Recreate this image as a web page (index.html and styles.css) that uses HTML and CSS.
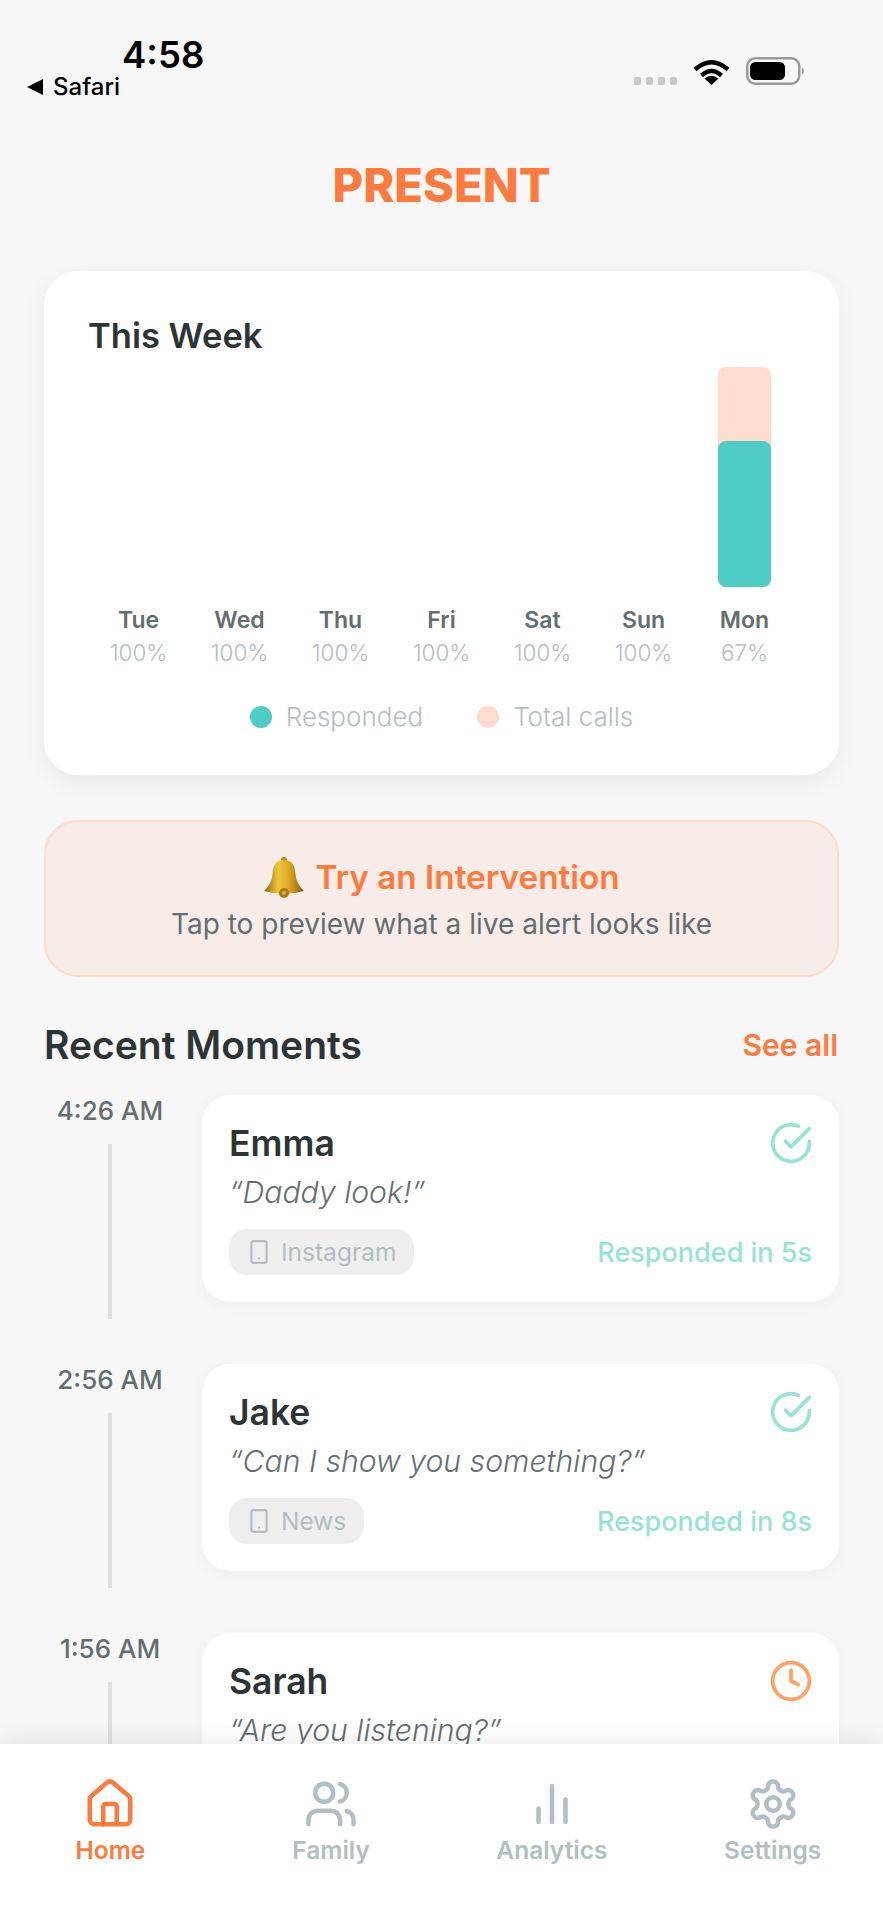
FILE: index.html
```html
<!DOCTYPE html>
<html lang="en">
<head>
  <meta charset="UTF-8">
  <meta name="viewport" content="width=device-width, initial-scale=1.0">
  <title>Present</title>
  <link rel="stylesheet" href="styles.css">
</head>
<body>
  <div class="page">
    <div class="status-bar">
      <div class="status-left">
        <div class="status-time">4:58</div>
        <div class="status-back">
          <svg width="16" height="16" viewBox="0 0 16 16"><polygon points="0,8 16,0 16,16" fill="#000"/></svg>
          <span>Safari</span>
        </div>
      </div>
      <div class="status-right">
        <div class="signal-dots"><i></i><i></i><i></i><i></i></div>
        <svg width="37" height="27" viewBox="0 0 37 27">
          <path d="M2 11.5Q18.500 -3 35 11.500" fill="none" stroke="#000" stroke-width="4.500"/>
          <path d="M8.500 17.500Q18.500 8.500 28.500 17.500" fill="none" stroke="#000" stroke-width="4.500"/>
          <path d="M18.500 27L11.500 20.500Q18.500 15 25.500 20.500Z" fill="#000"/>
        </svg>
        <svg width="59" height="28" viewBox="0 0 59 28">
          <rect x="1.250" y="1.250" width="52" height="25.500" rx="8" fill="none" stroke="#9a9a9a" stroke-width="2.500"/>
          <rect x="4" y="5" width="35" height="18" rx="5.500" fill="#000"/>
          <path d="M56 10.500a4 4 0 0 1 0 7z" fill="#9a9a9a"/>
        </svg>
      </div>
    </div>

    <h1 class="brand">PRESENT</h1>

    <div class="content">
      <section class="week-card">
        <h2 class="week-title">This Week</h2>
        <div class="bars">
          <div class="bar-col"></div>
          <div class="bar-col"></div>
          <div class="bar-col"></div>
          <div class="bar-col"></div>
          <div class="bar-col"></div>
          <div class="bar-col"></div>
          <div class="bar-col">
            <div class="bar-total">
              <div class="bar-responded" style="height: 66.5%"></div>
            </div>
          </div>
        </div>
        <div class="days">
          <div class="day"><span class="day-name">Tue</span><span class="day-pct">100%</span></div>
          <div class="day"><span class="day-name">Wed</span><span class="day-pct">100%</span></div>
          <div class="day"><span class="day-name">Thu</span><span class="day-pct">100%</span></div>
          <div class="day"><span class="day-name">Fri</span><span class="day-pct">100%</span></div>
          <div class="day"><span class="day-name">Sat</span><span class="day-pct">100%</span></div>
          <div class="day"><span class="day-name">Sun</span><span class="day-pct">100%</span></div>
          <div class="day"><span class="day-name">Mon</span><span class="day-pct">67%</span></div>
        </div>
        <div class="legend">
          <div class="legend-item"><span class="dot dot-teal"></span>Responded</div>
          <div class="legend-item"><span class="dot dot-peach"></span>Total calls</div>
        </div>
      </section>

      <section class="intervention">
        <div class="intervention-title">
          <svg class="bell" width="42" height="42" viewBox="0 0 42 42">
            <defs>
              <linearGradient id="bell-gold" x1="0" y1="0" x2="1" y2="0">
                <stop offset="0" stop-color="#8a6410"/>
                <stop offset="0.35" stop-color="#f0c63a"/>
                <stop offset="0.65" stop-color="#d9a521"/>
                <stop offset="1" stop-color="#7d5a0c"/>
              </linearGradient>
            </defs>
            <circle cx="21" cy="4" r="3" fill="#b88a1a"/>
            <path d="M21 4C12 4 10 11 9.500 18C9 25 6 30 1 35Q21 41 41 35C36 30 33 25 32.500 18C32 11 30 4 21 4Z" fill="url(#bell-gold)"/>
            <circle cx="21" cy="37" r="5" fill="#a87a18"/>
            <circle cx="21" cy="37" r="2" fill="#e0b040"/>
          </svg>
          <span>Try an Intervention</span>
        </div>
        <div class="intervention-sub">Tap to preview what a live alert looks like</div>
      </section>

      <div class="section-head">
        <h2>Recent Moments</h2>
        <span class="see-all">See all</span>
      </div>

      <div class="moments">
        <div class="moment">
          <div class="moment-time">
            <span>4:26 AM</span>
            <div class="moment-line"></div>
          </div>
          <div class="moment-card">
            <div class="moment-top">
              <span class="moment-name">Emma</span>
              <svg class="state-icon icon-teal" viewBox="0 0 24 24"><path d="M22 11.080V12a10 10 0 1 1-5.930-9.140"/><polyline points="22 4 12 14.010 9 11.010"/></svg>
            </div>
            <div class="moment-quote">“Daddy look!”</div>
            <div class="moment-foot">
              <span class="app-pill">
                <svg class="phone-icon" viewBox="0 0 24 24"><rect x="5" y="2" width="14" height="20" rx="2"/><line x1="12" y1="18" x2="12.010" y2="18"/></svg>
                Instagram
              </span>
              <span class="responded">Responded in 5s</span>
            </div>
          </div>
        </div>

        <div class="moment">
          <div class="moment-time">
            <span>2:56 AM</span>
            <div class="moment-line"></div>
          </div>
          <div class="moment-card">
            <div class="moment-top">
              <span class="moment-name">Jake</span>
              <svg class="state-icon icon-teal" viewBox="0 0 24 24"><path d="M22 11.080V12a10 10 0 1 1-5.930-9.140"/><polyline points="22 4 12 14.010 9 11.010"/></svg>
            </div>
            <div class="moment-quote">“Can I show you something?”</div>
            <div class="moment-foot">
              <span class="app-pill">
                <svg class="phone-icon" viewBox="0 0 24 24"><rect x="5" y="2" width="14" height="20" rx="2"/><line x1="12" y1="18" x2="12.010" y2="18"/></svg>
                News
              </span>
              <span class="responded">Responded in 8s</span>
            </div>
          </div>
        </div>

        <div class="moment">
          <div class="moment-time">
            <span>1:56 AM</span>
            <div class="moment-line"></div>
          </div>
          <div class="moment-card">
            <div class="moment-top">
              <span class="moment-name">Sarah</span>
              <svg class="state-icon icon-amber" viewBox="0 0 24 24"><circle cx="12" cy="12" r="10"/><polyline points="12 6 12 12 16 14"/></svg>
            </div>
            <div class="moment-quote">“Are you listening?”</div>
          </div>
        </div>
      </div>
    </div>

    <nav class="tab-bar">
      <div class="tab tab-active">
        <svg class="tab-icon" viewBox="0 0 24 24"><path d="M15 21v-8a1 1 0 0 0-1-1h-4a1 1 0 0 0-1 1v8"/><path d="M3 10a2 2 0 0 1 .709-1.528l7-5.999a2 2 0 0 1 2.582 0l7 5.999A2 2 0 0 1 21 10v9a2 2 0 0 1-2 2H5a2 2 0 0 1-2-2z"/></svg>
        <span>Home</span>
      </div>
      <div class="tab">
        <svg class="tab-icon" viewBox="0 0 24 24"><path d="M16 21v-2a4 4 0 0 0-4-4H6a4 4 0 0 0-4 4v2"/><circle cx="9" cy="7" r="4"/><path d="M22 21v-2a4 4 0 0 0-3-3.870"/><path d="M16 3.130a4 4 0 0 1 0 7.750"/></svg>
        <span>Family</span>
      </div>
      <div class="tab">
        <svg class="tab-icon" viewBox="0 0 24 24"><line x1="18" y1="20" x2="18" y2="10"/><line x1="12" y1="20" x2="12" y2="4"/><line x1="6" y1="20" x2="6" y2="14"/></svg>
        <span>Analytics</span>
      </div>
      <div class="tab">
        <svg class="tab-icon" viewBox="0 0 24 24"><path d="M12.220 2h-.44a2 2 0 0 0-2 2v.18a2 2 0 0 1-1 1.730l-.43.25a2 2 0 0 1-2 0l-.15-.08a2 2 0 0 0-2.730.73l-.22.38a2 2 0 0 0 .73 2.730l.15.1a2 2 0 0 1 1 1.720v.51a2 2 0 0 1-1 1.740l-.15.09a2 2 0 0 0-.73 2.730l.22.38a2 2 0 0 0 2.730.73l.15-.08a2 2 0 0 1 2 0l.43.25a2 2 0 0 1 1 1.730V20a2 2 0 0 0 2 2h.44a2 2 0 0 0 2-2v-.18a2 2 0 0 1 1-1.730l.43-.25a2 2 0 0 1 2 0l.15.08a2 2 0 0 0 2.730-.73l.22-.39a2 2 0 0 0-.73-2.730l-.15-.08a2 2 0 0 1-1-1.740v-.5a2 2 0 0 1 1-1.740l.15-.09a2 2 0 0 0 .73-2.730l-.22-.38a2 2 0 0 0-2.730-.73l-.15.08a2 2 0 0 1-2 0l-.43-.25a2 2 0 0 1-1-1.730V4a2 2 0 0 0-2-2z"/><circle cx="12" cy="12" r="3"/></svg>
        <span>Settings</span>
      </div>
    </nav>
  </div>
</body>
</html>
```

FILE: styles.css
```css
body {
  margin: 0;
  padding: 0;
  background-color: #f7f7f7;
  font-family: Inter, "Liberation Sans", sans-serif;
  color: #2d3436;
}
h1, h2 {
  margin: 0;
}
.page {
  position: relative;
  height: 1920px;
  overflow: hidden;
}

/* status bar */
.status-bar {
  display: flex;
  justify-content: space-between;
  align-items: flex-start;
  height: 124px;
  padding: 0 78px 0 27px;
  box-sizing: border-box;
}
.status-time {
  margin: 33px 0 0 95px;
  font-size: 36.5px;
  line-height: 44px;
  font-weight: 600;
  color: #000;
}
.status-back {
  display: flex;
  align-items: center;
  gap: 10px;
  margin-top: -4px;
  font-size: 24px;
  line-height: 28px;
  font-weight: 500;
  color: #000;
}
.status-right {
  display: flex;
  align-items: flex-end;
  gap: 16px;
  margin-top: 57px;
}
.signal-dots {
  display: flex;
  gap: 5px;
  height: 8px;
}
.signal-dots i {
  width: 7px;
  height: 8px;
  border-radius: 2px;
  background-color: #c8c8c8;
}

.brand {
  height: 122px;
  font-size: 47px;
  line-height: 122px;
  font-weight: 800;
  text-align: center;
  color: #ff7a3d;
}

.content {
  padding: 25px 44px 0;
}

/* this week card */
.week-card {
  padding: 44px 44px 42px;
  background-color: white;
  border-radius: 34px;
  box-shadow: 0 8px 24px rgba(0, 0, 0, 0.06);
}
.week-title {
  font-size: 34.5px;
  line-height: 42px;
  font-weight: 600;
}
.bars, .days {
  display: grid;
  grid-template-columns: repeat(7, 1fr);
}
.bars {
  height: 220px;
  margin-top: 10px;
}
.bar-col {
  display: flex;
  justify-content: center;
}
.bar-total {
  display: flex;
  align-items: flex-end;
  width: 53px;
  height: 100%;
  background-color: #ffdccf;
  border-radius: 8px;
}
.bar-responded {
  width: 100%;
  background-color: #4ecdc4;
  border-radius: 8px;
}
.days {
  margin-top: 18px;
}
.day {
  display: flex;
  flex-direction: column;
  align-items: center;
}
.day-name {
  font-size: 23px;
  line-height: 30px;
  font-weight: 600;
  color: #636e72;
}
.day-pct {
  margin-top: 5px;
  font-size: 22.4px;
  line-height: 26px;
  font-weight: 300;
  color: #b2bec3;
}
.legend {
  display: flex;
  justify-content: center;
  gap: 54px;
  margin-top: 35px;
}
.legend-item {
  display: flex;
  align-items: center;
  gap: 14px;
  font-size: 26px;
  line-height: 32px;
  font-weight: 300;
  color: #b2bec3;
}
.dot {
  width: 22px;
  height: 22px;
  border-radius: 50%;
}
.dot-teal {
  background-color: #4ecdc4;
}
.dot-peach {
  background-color: #ffdccf;
}

/* intervention banner */
.intervention {
  display: flex;
  flex-direction: column;
  align-items: center;
  justify-content: center;
  gap: 8px;
  height: 157px;
  box-sizing: border-box;
  margin-top: 45px;
  background-color: #f7ece8;
  border: 2px solid #fddccd;
  border-radius: 34px;
}
.intervention-title {
  display: flex;
  align-items: center;
  gap: 10px;
  font-size: 33.3px;
  line-height: 40px;
  font-weight: 600;
  color: #ff7a3d;
}
.intervention-sub {
  font-size: 28px;
  line-height: 36px;
  color: #636e72;
}

/* recent moments */
.section-head {
  display: flex;
  justify-content: space-between;
  align-items: center;
  margin-top: 45px;
}
.section-head h2 {
  font-size: 39px;
  line-height: 46px;
  font-weight: 600;
}
.see-all {
  margin-right: 1px;
  font-size: 30px;
  font-weight: 600;
  color: #ff7a3d;
}
.moments {
  display: flex;
  flex-direction: column;
  gap: 45px;
  margin-top: 27px;
}
.moment {
  display: flex;
  gap: 26px;
}
.moment-time {
  display: flex;
  flex-direction: column;
  align-items: center;
  flex: 0 0 132px;
  font-size: 26px;
  line-height: 32px;
  font-weight: 500;
  color: #636e72;
}
.moment-line {
  flex: 1;
  width: 4px;
  margin-top: 17px;
  background-color: #e0e0e0;
}
.moment-card {
  flex: 1;
  margin-bottom: 17px;
  padding: 28px 27px 27px 27px;
  background-color: white;
  border-radius: 28px;
  box-shadow: 0 4px 16px rgba(0, 0, 0, 0.04);
}
.moment-top {
  display: flex;
  justify-content: space-between;
  align-items: center;
  height: 40px;
}
.moment-name {
  margin-top: 2px;
  font-size: 35.5px;
  line-height: 40px;
  font-weight: 600;
}
.state-icon {
  width: 44px;
  height: 44px;
  margin-right: -1px;
  fill: none;
  stroke-width: 2;
  stroke-linecap: round;
  stroke-linejoin: round;
}
.icon-teal {
  stroke: #96e3d5;
}
.icon-amber {
  stroke: #ffa261;
}
.moment-quote {
  margin-top: 10px;
  font-size: 30.2px;
  line-height: 38px;
  font-weight: 300;
  font-style: italic;
  color: #636e72;
}
.moment-foot {
  display: flex;
  justify-content: space-between;
  align-items: center;
  margin-top: 18px;
}
.app-pill {
  display: flex;
  align-items: center;
  gap: 9px;
  height: 46px;
  padding: 0 18px 0 17px;
  background-color: #eeeeee;
  border-radius: 18px;
  font-size: 24.5px;
  color: #b2bec3;
}
.phone-icon {
  width: 26px;
  height: 26px;
  fill: none;
  stroke: #b2bec3;
  stroke-width: 2;
  stroke-linecap: round;
  stroke-linejoin: round;
}
.responded {
  font-size: 27px;
  font-weight: 500;
  color: #96e3d5;
}

/* bottom tabs */
.tab-bar {
  position: absolute;
  left: 0;
  right: 0;
  bottom: 0;
  display: grid;
  grid-template-columns: repeat(4, 1fr);
  height: 176px;
  padding-top: 33px;
  box-sizing: border-box;
  background-color: white;
  box-shadow: 0 -4px 24px rgba(0, 0, 0, 0.08);
}
.tab {
  display: flex;
  flex-direction: column;
  align-items: center;
  font-size: 24.5px;
  line-height: 30px;
  font-weight: 600;
  color: #b2bec3;
}
.tab span {
  margin-top: 4px;
}
.tab-icon {
  width: 54px;
  height: 54px;
  fill: none;
  stroke: #b2bec3;
  stroke-width: 2;
  stroke-linecap: round;
  stroke-linejoin: round;
}
.tab-active {
  color: #ff7a3d;
}
.tab-active .tab-icon {
  stroke: #ff7a3d;
}
```
